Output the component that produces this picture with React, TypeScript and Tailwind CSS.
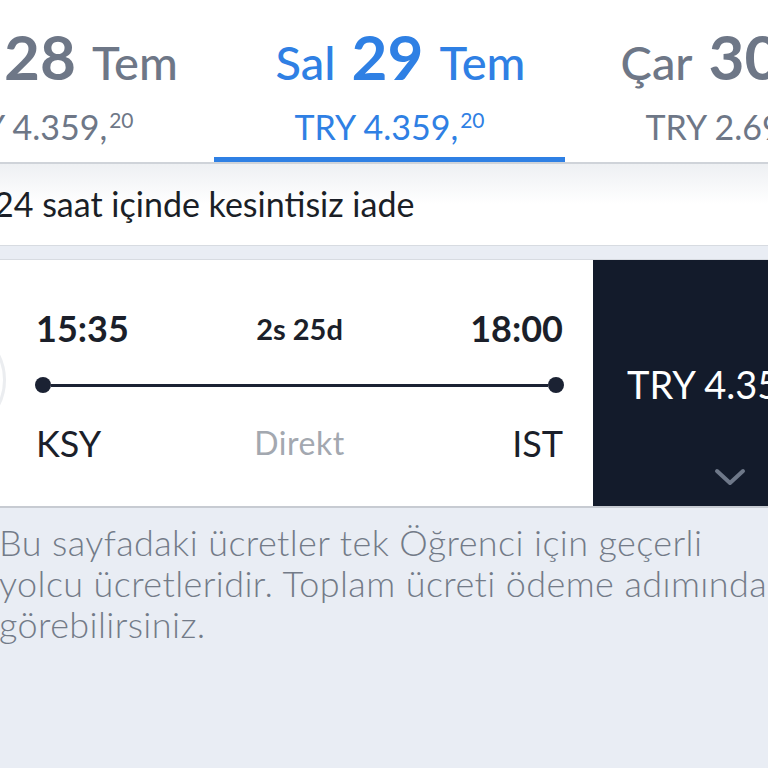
import React from "react";

type Tab = { day: string; num: string; month: string; price: string; cents: string; active?: boolean };

const tabs: Tab[] = [
  { day: "Pzt", num: "28", month: "Tem", price: "TRY 4.359,", cents: "20" },
  { day: "Sal", num: "29", month: "Tem", price: "TRY 4.359,", cents: "20", active: true },
  { day: "Çar", num: "30", month: "Tem", price: "TRY 2.699,", cents: "00" },
];

function DateTab({ t }: { t: Tab }) {
  const color = t.active ? "text-[#2f80e4]" : "text-[#6e7787]";
  return (
    <div className={`relative w-[351px] shrink-0 h-[162px] flex flex-col items-center ${color}`}>
      <div className="flex items-baseline gap-[16px] mt-[25px] ml-[22px] leading-none whitespace-nowrap">
        <span className="text-[47px] font-medium">{t.day}</span>
        <span className="text-[62px] font-bold">{t.num}</span>
        <span className="text-[47px] font-medium">{t.month}</span>
      </div>
      <div className="flex items-start mt-[23px] leading-none whitespace-nowrap">
        <span className="text-[34px]">{t.price}</span>
        <span className="text-[21px] ml-[2px] -mt-[1px]">{t.cents}</span>
      </div>
      {t.active && <div className="absolute left-0 right-0 bottom-0 h-[5px] bg-[#2f80e4]" />}
    </div>
  );
}

export default function App() {
  return (
    <div className="w-[768px] h-[768px] overflow-hidden bg-[#e9edf4] font-['Lato',sans-serif]">
      <header className="bg-white border-b-2 border-[#cfd3d9]">
        <div className="flex ml-[-137px]">
          {tabs.map((t) => (
            <DateTab key={t.num} t={t} />
          ))}
        </div>
      </header>
      <div className="h-[82px] bg-gradient-to-b from-[#eef0f3] via-white to-white border-b border-[#d7dbe1] flex items-center">
        <span className="ml-[-6px] mt-[-2px] text-[34px] text-[#1b1f27] whitespace-nowrap">24 saat içinde kesintisiz iade</span>
      </div>
      <div className="h-[13px]" />
      <div className="h-[249px] flex bg-white border-t border-[#d7dbe1] border-b-2 border-b-[#c7cbd2]">
        <div className="relative w-[593px] shrink-0 pl-[36px] pr-[30px] flex flex-col overflow-hidden">
          <div className="absolute left-[-106px] top-[64px] w-[112px] h-[112px] rounded-full border-[3px] border-[#ebedf0]" />
          <div className="grid grid-cols-[1fr_auto_1fr] items-center mt-[50px] leading-none text-[#1b1f2a]">
            <span className="text-[36px] font-bold">15:35</span>
            <span className="text-[29px] font-bold">2s 25d</span>
            <span className="text-[36px] font-bold text-right">18:00</span>
          </div>
          <div className="relative mt-[30px] h-[18px] flex items-center">
            <div className="w-[16px] h-[16px] rounded-full bg-[#1b2233] ml-[-1px]" />
            <div className="flex-1 h-[3px] bg-[#1b2233]" />
            <div className="w-[16px] h-[16px] rounded-full bg-[#1b2233] mr-[-1px]" />
          </div>
          <div className="grid grid-cols-[1fr_auto_1fr] items-center mt-[31px] leading-none">
            <span className="text-[36px] text-[#1b1f2a]">KSY</span>
            <span className="text-[32px] tracking-[0.5px] text-[#a3a8b0]">Direkt</span>
            <span className="text-[36px] text-[#1b1f2a] text-right">IST</span>
          </div>
        </div>
        <div className="flex-1 bg-[#131b2b] flex flex-col">
          <div className="mt-[105px] ml-[34px] text-[38px] text-white leading-none whitespace-nowrap">TRY 4.359,20</div>
          <div className="mt-[65px] ml-[121px] text-[#6e7889]">
            <svg width="32" height="18" viewBox="0 0 32 18" fill="none">
              <path d="M3 3 L16 15 L29 3" stroke="currentColor" strokeWidth="4" strokeLinecap="round" strokeLinejoin="round" />
            </svg>
          </div>
        </div>
      </div>
      <p className="mt-[14px] ml-[-1px] whitespace-nowrap text-[36px] leading-[41px] tracking-[0.4px] font-light text-[#737b88]">
        Bu sayfadaki ücretler tek Öğrenci için geçerli
        <br />
        yolcu ücretleridir. Toplam ücreti ödeme adımında
        <br />
        görebilirsiniz.
      </p>
    </div>
  );
}
